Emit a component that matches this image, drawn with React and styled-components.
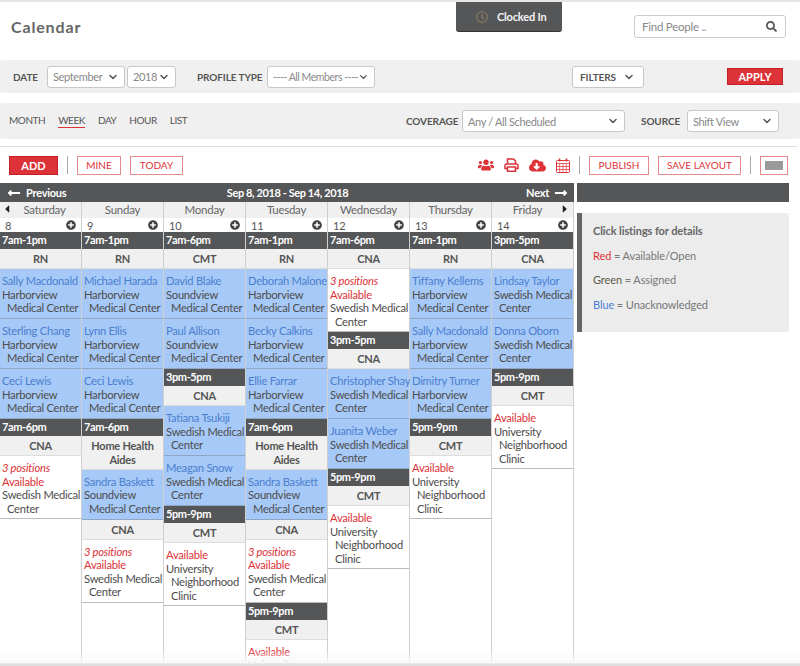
import React from "react";
import styled, { createGlobalStyle } from "styled-components";
import {
  FaUsers,
  FaCloudDownloadAlt,
  FaPlusCircle,
  FaLongArrowAltLeft,
  FaLongArrowAltRight,
  FaCaretLeft,
  FaCaretRight,
  FaSearch,
  FaRegClock,
} from "react-icons/fa";
import { FiChevronDown } from "react-icons/fi";

const RED = "#dc3238";
const DARK = "#555657";
const BAR = "#f0f0f0";

const HARBORVIEW = "Harborview Medical Center";
const SOUNDVIEW = "Soundview Medical Center";
const SWEDISH = "Swedish Medical Center";
const UNIVERSITY = "University Neighborhood Clinic";

// 한 컬럼 = 요일 + 날짜 + 교대 블록 목록
const shift = (time, role) => ({ type: "shift", time, role });
const person = (name, place) => ({ type: "person", name, place });
const open = (place, positions) => ({ type: "open", place, positions });

const days = [
  {
    day: "Saturday",
    date: 8,
    blocks: [
      shift("7am-1pm", "RN"),
      person("Sally Macdonald", HARBORVIEW),
      person("Sterling Chang", HARBORVIEW),
      person("Ceci Lewis", HARBORVIEW),
      shift("7am-6pm", "CNA"),
      open(SWEDISH, "3 positions"),
    ],
  },
  {
    day: "Sunday",
    date: 9,
    blocks: [
      shift("7am-1pm", "RN"),
      person("Michael Harada", HARBORVIEW),
      person("Lynn Ellis", HARBORVIEW),
      person("Ceci Lewis", HARBORVIEW),
      shift("7am-6pm", "Home Health Aides"),
      person("Sandra Baskett", SOUNDVIEW),
      { type: "role", role: "CNA" },
      open(SWEDISH, "3 positions"),
    ],
  },
  {
    day: "Monday",
    date: 10,
    blocks: [
      shift("7am-6pm", "CMT"),
      person("David Blake", SOUNDVIEW),
      person("Paul Allison", SOUNDVIEW),
      shift("3pm-5pm", "CNA"),
      person("Tatiana Tsukiji", SWEDISH),
      person("Meagan Snow", SWEDISH),
      shift("5pm-9pm", "CMT"),
      open(UNIVERSITY),
    ],
  },
  {
    day: "Tuesday",
    date: 11,
    blocks: [
      shift("7am-1pm", "RN"),
      person("Deborah Malone", HARBORVIEW),
      person("Becky Calkins", HARBORVIEW),
      person("Ellie Farrar", HARBORVIEW),
      shift("7am-6pm", "Home Health Aides"),
      person("Sandra Baskett", SOUNDVIEW),
      { type: "role", role: "CNA" },
      open(SWEDISH, "3 positions"),
      shift("5pm-9pm", "CMT"),
      open(UNIVERSITY),
    ],
  },
  {
    day: "Wednesday",
    date: 12,
    blocks: [
      shift("7am-6pm", "CNA"),
      open(SWEDISH, "3 positions"),
      shift("3pm-5pm", "CNA"),
      person("Christopher Shay", SWEDISH),
      person("Juanita Weber", SWEDISH),
      shift("5pm-9pm", "CMT"),
      open(UNIVERSITY),
    ],
  },
  {
    day: "Thursday",
    date: 13,
    blocks: [
      shift("7am-1pm", "RN"),
      person("Tiffany Kellems", HARBORVIEW),
      person("Sally Macdonald", HARBORVIEW),
      person("Dimitry Turner", HARBORVIEW),
      shift("5pm-9pm", "CMT"),
      open(UNIVERSITY),
    ],
  },
  {
    day: "Friday",
    date: 14,
    blocks: [
      shift("3pm-5pm", "CNA"),
      person("Lindsay Taylor", SWEDISH),
      person("Donna Oborn", SWEDISH),
      shift("5pm-9pm", "CMT"),
      open(UNIVERSITY),
    ],
  },
];

const PrintIcon = () => (
  <svg width="15" height="14" viewBox="0 0 15 14" fill="none" stroke="currentColor" strokeWidth="1.5">
    <path d="M3.5 6V1h6l2 2v3" />
    <path d="M3 10.5H1V7.5a1.5 1.5 0 0 1 1.5-1.5h10A1.5 1.5 0 0 1 14 7.5v3h-2" />
    <path d="M3.5 9h8v4.2h-8z" />
  </svg>
);

const CalendarIcon = () => (
  <svg width="14" height="15" viewBox="0 0 14 15" fill="none" stroke="currentColor" strokeWidth="1">
    <rect x="0.5" y="2.5" width="13" height="12" rx="1" />
    <path d="M0.5 5.5h13M0.5 8.5h13M0.5 11.5h13M3.7 5.5v9M7 5.5v9M10.3 5.5v9" opacity="0.7" />
    <path d="M3.5 0.5v3M10.5 0.5v3" strokeWidth="1.6" />
  </svg>
);

const Block = ({ block }) => {
  if (block.type === "shift") {
    return (
      <>
        <ShiftTime>{block.time}</ShiftTime>
        <Role>{block.role}</Role>
      </>
    );
  }
  if (block.type === "role") return <Role>{block.role}</Role>;
  if (block.type === "person") {
    return (
      <PersonCard>
        <PersonName>{block.name}</PersonName>
        <Place>{block.place}</Place>
      </PersonCard>
    );
  }
  return (
    <OpenCard>
      {block.positions && <Positions>{block.positions}</Positions>}
      <Available>Available</Available>
      <Place>{block.place}</Place>
    </OpenCard>
  );
};

const Select = ({ width, tight, children }) => (
  <SelectBox $width={width} $tight={tight}>
    <span>{children}</span>
    <FiChevronDown size={12} color="#555" strokeWidth={3} />
  </SelectBox>
);

const App = () => {
  return (
    <Page>
      <GlobalStyle />
      <Header>
        <Title>Calendar</Title>
        <ClockBadge>
          <FaRegClock size={12} color="#8c7c5e" />
          Clocked In
        </ClockBadge>
        <SearchBox>
          <span>Find People ..</span>
          <FaSearch size={11} color="#555" />
        </SearchBox>
      </Header>

      <FilterBar>
        <FieldLabel $width={34}>DATE</FieldLabel>
        <Select width={78}>September</Select>
        <Gap $width={2} />
        <Select width={49}>2018</Select>
        <Gap $width={21} />
        <FieldLabel $width={70}>PROFILE TYPE</FieldLabel>
        <Select width={108} tight>
          ---- All Members ----
        </Select>
        <FilterButton>
          FILTERS <FiChevronDown size={12} color="#555" strokeWidth={3} />
        </FilterButton>
        <ApplyButton>APPLY</ApplyButton>
      </FilterBar>

      <ViewBar>
        <ViewTab>MONTH</ViewTab>
        <ViewTab $active>WEEK</ViewTab>
        <ViewTab>DAY</ViewTab>
        <ViewTab>HOUR</ViewTab>
        <ViewTab>LIST</ViewTab>
        <ViewFields>
          <FieldLabel $width={56}>COVERAGE</FieldLabel>
          <Select width={163}>Any / All Scheduled</Select>
          <Gap $width={16} />
          <FieldLabel $width={46}>SOURCE</FieldLabel>
          <Select width={92}>Shift View</Select>
        </ViewFields>
      </ViewBar>

      <Toolbar>
        <AddButton>ADD</AddButton>
        <Separator />
        <OutlineButton $width={44}>MINE</OutlineButton>
        <OutlineButton $width={53}>TODAY</OutlineButton>
        <ToolIcons>
          <FaUsers size={16} />
          <PrintIcon />
          <FaCloudDownloadAlt size={17} />
          <CalendarIcon />
        </ToolIcons>
        <Separator />
        <OutlineButton $width={60}>PUBLISH</OutlineButton>
        <OutlineButton $width={83}>SAVE LAYOUT</OutlineButton>
        <Separator />
        <SwatchButton>
          <Swatch />
        </SwatchButton>
      </Toolbar>

      <Main>
        <CalendarPane>
          <NavBar>
            <NavLink>
              <FaLongArrowAltLeft size={14} /> Previous
            </NavLink>
            <NavTitle>Sep 8, 2018 - Sep 14, 2018</NavTitle>
            <NavLink $end>
              Next <FaLongArrowAltRight size={14} />
            </NavLink>
          </NavBar>
          <Grid>
            {days.map((d, i) => (
              <Column key={d.day}>
                <DayName $first={i === 0} $last={i === days.length - 1}>
                  {i === 0 && (
                    <CaretLeft>
                      <FaCaretLeft size={12} />
                    </CaretLeft>
                  )}
                  {d.day}
                  {i === days.length - 1 && (
                    <CaretRight>
                      <FaCaretRight size={12} />
                    </CaretRight>
                  )}
                </DayName>
                <DateRow>
                  {d.date}
                  <FaPlusCircle size={10} color="#444" />
                </DateRow>
                {d.blocks.map((b, j) => (
                  <Block key={j} block={b} />
                ))}
              </Column>
            ))}
          </Grid>
        </CalendarPane>

        <SidePane>
          <SideBar />
          <Legend>
            <LegendTitle>Click listings for details</LegendTitle>
            <LegendRow>
              <LegendKey $color={RED}>Red</LegendKey> = Available/Open
            </LegendRow>
            <LegendRow>
              <LegendKey $color="#5a5a48">Green</LegendKey> = Assigned
            </LegendRow>
            <LegendRow>
              <LegendKey $color="#4a7fd6">Blue</LegendKey> = Unacknowledged
            </LegendRow>
          </Legend>
        </SidePane>
      </Main>
      <BottomFade />
    </Page>
  );
};

export default App;

const GlobalStyle = createGlobalStyle`
  html, body {
    margin: 0;
    padding: 0;
    background: #fff;
    overflow: hidden;
  }
  * {
    box-sizing: border-box;
  }
`;

const Page = styled.div`
  position: relative;
  width: 800px;
  height: 666px;
  overflow: hidden;
  border-top: 2px solid #e6e6e6;
  font-family: "Lato", "Open Sans", sans-serif;
  font-size: 11.2px;
  letter-spacing: -0.25px;
  color: #555;
`;

const Header = styled.header`
  display: flex;
  align-items: flex-start;
  height: 58px;
  padding-left: 11px;
`;

const Title = styled.h1`
  width: 445px;
  margin: 15px 0 0;
  font-size: 16px;
  font-weight: 700;
  line-height: 20px;
  letter-spacing: 0.85px;
  color: #666;
`;

const ClockBadge = styled.div`
  display: flex;
  align-items: center;
  gap: 9px;
  width: 106px;
  height: 30px;
  padding-left: 20px;
  background: ${DARK};
  border-radius: 0 0 3px 3px;
  border-bottom: 1px solid #333;
  color: #f4f4f4;
  font-weight: 700;
  font-size: 11px;
  letter-spacing: -0.2px;
`;

const SearchBox = styled.div`
  display: flex;
  align-items: center;
  justify-content: space-between;
  width: 152px;
  height: 23px;
  margin: 13px 0 0 72px;
  padding: 0 8px 0 7px;
  border: 1px solid #ccc;
  border-radius: 3px;
  color: #888;
  font-size: 11.5px;
`;

const FilterBar = styled.div`
  display: flex;
  align-items: center;
  height: 33px;
  margin-bottom: 10px;
  padding-left: 13px;
  background: ${BAR};
  border-radius: 3px;
`;

const Gap = styled.span`
  flex: none;
  width: ${(p) => p.$width}px;
`;

const FieldLabel = styled.span`
  flex: none;
  width: ${(p) => p.$width}px;
  font-size: 10px;
  font-weight: 700;
  letter-spacing: -0.1px;
  color: #555;
  white-space: nowrap;
`;

const SelectBox = styled.div`
  display: flex;
  align-items: center;
  justify-content: space-between;
  flex: none;
  width: ${(p) => p.$width}px;
  height: 22px;
  padding: 0 5px;
  background: #fff;
  border: 1px solid #c8c8c8;
  border-radius: 3px;
  font-size: ${(p) => (p.$tight ? "10.5px" : "11px")};
  letter-spacing: ${(p) => (p.$tight ? "-0.45px" : "-0.35px")};
  color: #888;
  white-space: nowrap;
`;

const FilterButton = styled.div`
  display: flex;
  align-items: center;
  gap: 7px;
  width: 72px;
  height: 22px;
  margin-left: 197px;
  padding-left: 7px;
  background: #fff;
  border: 1px solid #c8c8c8;
  border-radius: 3px;
  font-size: 10px;
  font-weight: 700;
  letter-spacing: -0.1px;
  color: #555;
`;

const ApplyButton = styled.button`
  width: 56px;
  height: 17px;
  margin-left: 83px;
  padding: 0;
  background: ${RED};
  border: 1px solid #c4202a;
  color: #fff;
  font: 700 11px "Lato", sans-serif;
`;

const ViewBar = styled.div`
  display: flex;
  align-items: center;
  height: 36px;
  padding-left: 9px;
  gap: 13px;
  background: ${BAR};
  border-radius: 3px;
`;

const ViewTab = styled.span`
  padding-bottom: 1px;
  font-size: 10px;
  letter-spacing: -0.45px;
  color: #555;
  border-bottom: 1px solid ${(p) => (p.$active ? RED : "transparent")};
`;

const ViewFields = styled.div`
  display: flex;
  align-items: center;
  margin-left: auto;
  padding-right: 21px;
`;

const Toolbar = styled.div`
  display: flex;
  align-items: center;
  gap: 9px;
  width: 797px;
  height: 37px;
  margin-top: 7px;
  padding: 0 9px;
  border-top: 1px solid #ddd;
`;

const AddButton = styled.button`
  width: 49px;
  height: 19px;
  padding: 0;
  background: ${RED};
  border: 1px solid #c4202a;
  color: #fff;
  font: 700 11px "Lato", sans-serif;
`;

const Separator = styled.span`
  width: 1px;
  height: 18px;
  background: #aaa;
`;

const OutlineButton = styled.button`
  width: ${(p) => p.$width}px;
  height: 19px;
  padding: 0;
  background: #fff;
  border: 1px solid #e58a8d;
  color: ${RED};
  font: 400 10px "Lato", sans-serif;
`;

const ToolIcons = styled.div`
  display: flex;
  align-items: center;
  gap: 10px;
  margin-left: auto;
  color: ${RED};
`;

const SwatchButton = styled.div`
  display: flex;
  align-items: center;
  justify-content: center;
  width: 28px;
  height: 19px;
  border: 1px solid #e58a8d;
`;

const Swatch = styled.span`
  width: 18px;
  height: 9px;
  background: #9a9a9a;
`;

const Main = styled.div`
  display: flex;
  gap: 3px;
`;

const CalendarPane = styled.section`
  width: 574px;
`;

const NavBar = styled.div`
  display: flex;
  align-items: center;
  height: 19px;
  padding: 0 6px 0 7px;
  background: ${DARK};
  color: #fff;
  font-size: 11px;
  font-weight: 700;
`;

const NavLink = styled.span`
  display: flex;
  flex: 1;
  align-items: center;
  justify-content: ${(p) => (p.$end ? "flex-end" : "flex-start")};
  gap: 5px;
`;

const NavTitle = styled.span`
  letter-spacing: -0.4px;
`;

const Grid = styled.div`
  display: grid;
  grid-template-columns: repeat(7, 82px);
`;

const Column = styled.div`
  display: flex;
  flex-direction: column;
  height: 470px;
  border-right: 1px solid #cfcfcf;
`;

const DayName = styled.div`
  position: relative;
  flex: none;
  height: 16px;
  padding-left: ${(p) => (p.$first ? "8px" : "0")};
  padding-right: ${(p) => (p.$last ? "10px" : "0")};
  background: ${BAR};
  text-align: center;
  font-size: 11.5px;
  line-height: 15px;
  color: #666;
`;

const CaretLeft = styled.span`
  position: absolute;
  left: 1px;
  top: 1px;
  color: #222;
`;

const CaretRight = styled.span`
  position: absolute;
  right: 2px;
  top: 1px;
  color: #222;
`;

const DateRow = styled.div`
  display: flex;
  flex: none;
  align-items: center;
  justify-content: space-between;
  height: 14px;
  padding: 0 5px;
  font-size: 11px;
  color: #555;
`;

const ShiftTime = styled.div`
  flex: none;
  height: 17px;
  padding-left: 2px;
  background: ${DARK};
  color: #fff;
  font-size: 11px;
  font-weight: 700;
  letter-spacing: -0.4px;
  line-height: 16px;
`;

const Role = styled.div`
  flex: none;
  padding: 3px 4px 2.5px;
  background: ${BAR};
  border-bottom: 1px solid #ddd;
  text-align: center;
  font-size: 11px;
  font-weight: 700;
  line-height: 13.5px;
  color: #555;
`;

const PersonCard = styled.div`
  flex: none;
  height: 50px;
  padding: 5px 0 0 2px;
  background: #a6c9f7;
  border-bottom: 1px solid #8fa6c4;
  line-height: 13.5px;
`;

const PersonName = styled.div`
  color: #4a7fd0;
  white-space: nowrap;
`;

const Place = styled.div`
  padding-left: 5px;
  text-indent: -5px;
  color: #4d4d4d;
`;

const OpenCard = styled.div`
  flex: none;
  padding: 5px 0 3px 2px;
  background: #fff;
  border-bottom: 1px solid #bbb;
  line-height: 13.5px;
`;

const Positions = styled.div`
  color: ${RED};
  font-style: italic;
`;

const Available = styled.div`
  color: ${RED};
`;

const SidePane = styled.aside`
  width: 212px;
`;

const SideBar = styled.div`
  height: 19px;
  background: ${DARK};
`;

const Legend = styled.div`
  height: 119px;
  margin-top: 11px;
  padding: 11px 11px 0;
  background: #ececec;
  border-left: 5px solid #666;
  border-radius: 0 3px 3px 0;
  font-size: 11px;
  letter-spacing: -0.1px;
  color: #777;
`;

const LegendTitle = styled.div`
  font-weight: 700;
  line-height: 14px;
  margin-bottom: 10.5px;
  color: #666;
`;

const LegendRow = styled.div`
  line-height: 14px;
  margin-bottom: 10.5px;
`;

const LegendKey = styled.span`
  color: ${(p) => p.$color};
`;

const BottomFade = styled.div`
  position: absolute;
  left: 0;
  right: 0;
  bottom: 0;
  height: 16px;
  background: linear-gradient(
    rgba(255, 255, 255, 0),
    rgba(248, 248, 248, 0.95) 82%,
    #dedede 86%
  );
  pointer-events: none;
`;
